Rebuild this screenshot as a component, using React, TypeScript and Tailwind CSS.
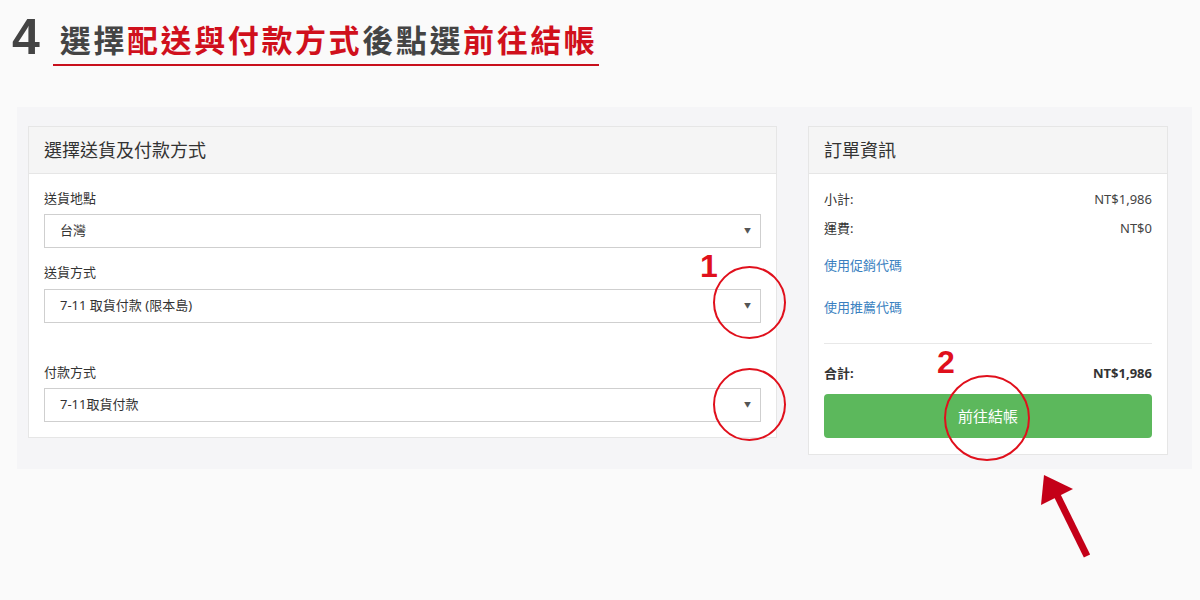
import React from "react";

const font = { fontFamily: '"Noto Sans", "Noto Sans CJK TC", sans-serif' };

const Select = ({ value }: { value: string }) => (
    <div className="h-[34px] border border-[#cfcfcf] bg-white flex items-center justify-between pl-[15px] pr-[9px] text-[13px] text-[#333]">
        <span>{value}</span>
        <span className="text-[7px] text-[#555]">▼</span>
    </div>
);

const App = () => {
    return (
        <div className="w-[1200px] h-[600px] bg-[#fafafa] relative overflow-hidden" style={font}>
            {/* Step heading */}
            <div className="flex items-start pt-[12px] pl-[12px]">
                <span className="text-[50px] leading-[50px] font-bold text-[#444]" style={{ fontFamily: '"Liberation Sans", Arial, sans-serif' }}>4</span>
                <div className="ml-[13px] mt-[6px] border-b-[2px] border-[#c8101c] pl-[7px] pr-[2px] pb-[2px]">
                    <span className="text-[31px] leading-[44px] font-bold tracking-[2.6px] text-[#444]">
                        選擇<span className="text-[#d0101c]">配送與付款方式</span>後點選<span className="text-[#d0101c]">前往結帳</span>
                    </span>
                </div>
            </div>

            {/* Main panel */}
            <div className="mt-[41px] ml-[17px] w-[1175px] h-[362px] bg-[#f5f5f7] pt-[19px] pl-[11px] flex items-start gap-[31px]">
                {/* Shipping & payment */}
                <div className="w-[749px] bg-white border border-[#e6e6e6]">
                    <div className="h-[47px] bg-[#f5f5f5] border-b border-[#e6e6e6] flex items-center pl-[15px] text-[18px] text-[#333]">
                        選擇送貨及付款方式
                    </div>
                    <div className="px-[15px] pt-[15px] pb-[15px]">
                        <div className="text-[13px] leading-[18px] text-[#333] mb-[7px]">送貨地點</div>
                        <Select value="台灣" />
                        <div className="text-[13px] leading-[18px] text-[#333] mt-[15px] mb-[8px]">送貨方式</div>
                        <Select value="7-11 取貨付款 (限本島)" />
                        <div className="text-[13px] leading-[18px] text-[#333] mt-[40px] mb-[7px]">付款方式</div>
                        <Select value="7-11取貨付款" />
                    </div>
                </div>

                {/* Order info */}
                <div className="w-[360px] bg-white border border-[#e6e6e6]">
                    <div className="h-[47px] bg-[#f5f5f5] border-b border-[#e6e6e6] flex items-center pl-[15px] text-[18px] text-[#333]">
                        訂單資訊
                    </div>
                    <div className="px-[15px] pt-[15px] pb-[16px] text-[13px] text-[#333]">
                        <div className="flex justify-between leading-[20px]">
                            <span>小計:</span>
                            <span className="text-[#444]">NT$1,986</span>
                        </div>
                        <div className="flex justify-between leading-[20px] mt-[9px]">
                            <span>運費:</span>
                            <span className="text-[#444]">NT$0</span>
                        </div>
                        <div className="leading-[20px] mt-[17px] text-[#3a7fc0]">使用促銷代碼</div>
                        <div className="leading-[20px] mt-[22px] text-[#3a7fc0]">使用推薦代碼</div>
                        <div className="border-t border-[#e8e8e8] mt-[26px]" />
                        <div className="flex justify-between leading-[20px] mt-[19px] font-bold">
                            <span>合計:</span>
                            <span>NT$1,986</span>
                        </div>
                        <button className="mt-[11px] w-full h-[44px] rounded-[4px] bg-[#5cb85c] text-white text-[15px]">
                            前往結帳
                        </button>
                    </div>
                </div>
            </div>

            {/* Annotations */}
            <span className="absolute left-[700px] top-[246px] text-[32px] leading-[40px] font-bold text-[#e0101c]" style={{ fontFamily: '"Liberation Sans", Arial, sans-serif' }}>1</span>
            <div className="absolute left-[713px] top-[266px] w-[73px] h-[73px] rounded-full border-[2px] border-[#e0101c]" />
            <div className="absolute left-[713px] top-[368px] w-[73px] h-[73px] rounded-full border-[2px] border-[#e0101c]" />
            <span className="absolute left-[937px] top-[342px] text-[32px] leading-[40px] font-bold text-[#e0101c]" style={{ fontFamily: '"Liberation Sans", Arial, sans-serif' }}>2</span>
            <div className="absolute left-[944px] top-[375px] w-[86px] h-[86px] rounded-full border-[2px] border-[#e0101c]" />
            <svg className="absolute left-[1030px] top-[465px]" width="70" height="100" viewBox="0 0 70 100">
                <line x1="57" y1="91" x2="27" y2="30" stroke="#c40018" strokeWidth="7" />
                <polygon points="14,10 43,24 11,40" fill="#c40018" />
            </svg>
        </div>
    );
};

export default App;
